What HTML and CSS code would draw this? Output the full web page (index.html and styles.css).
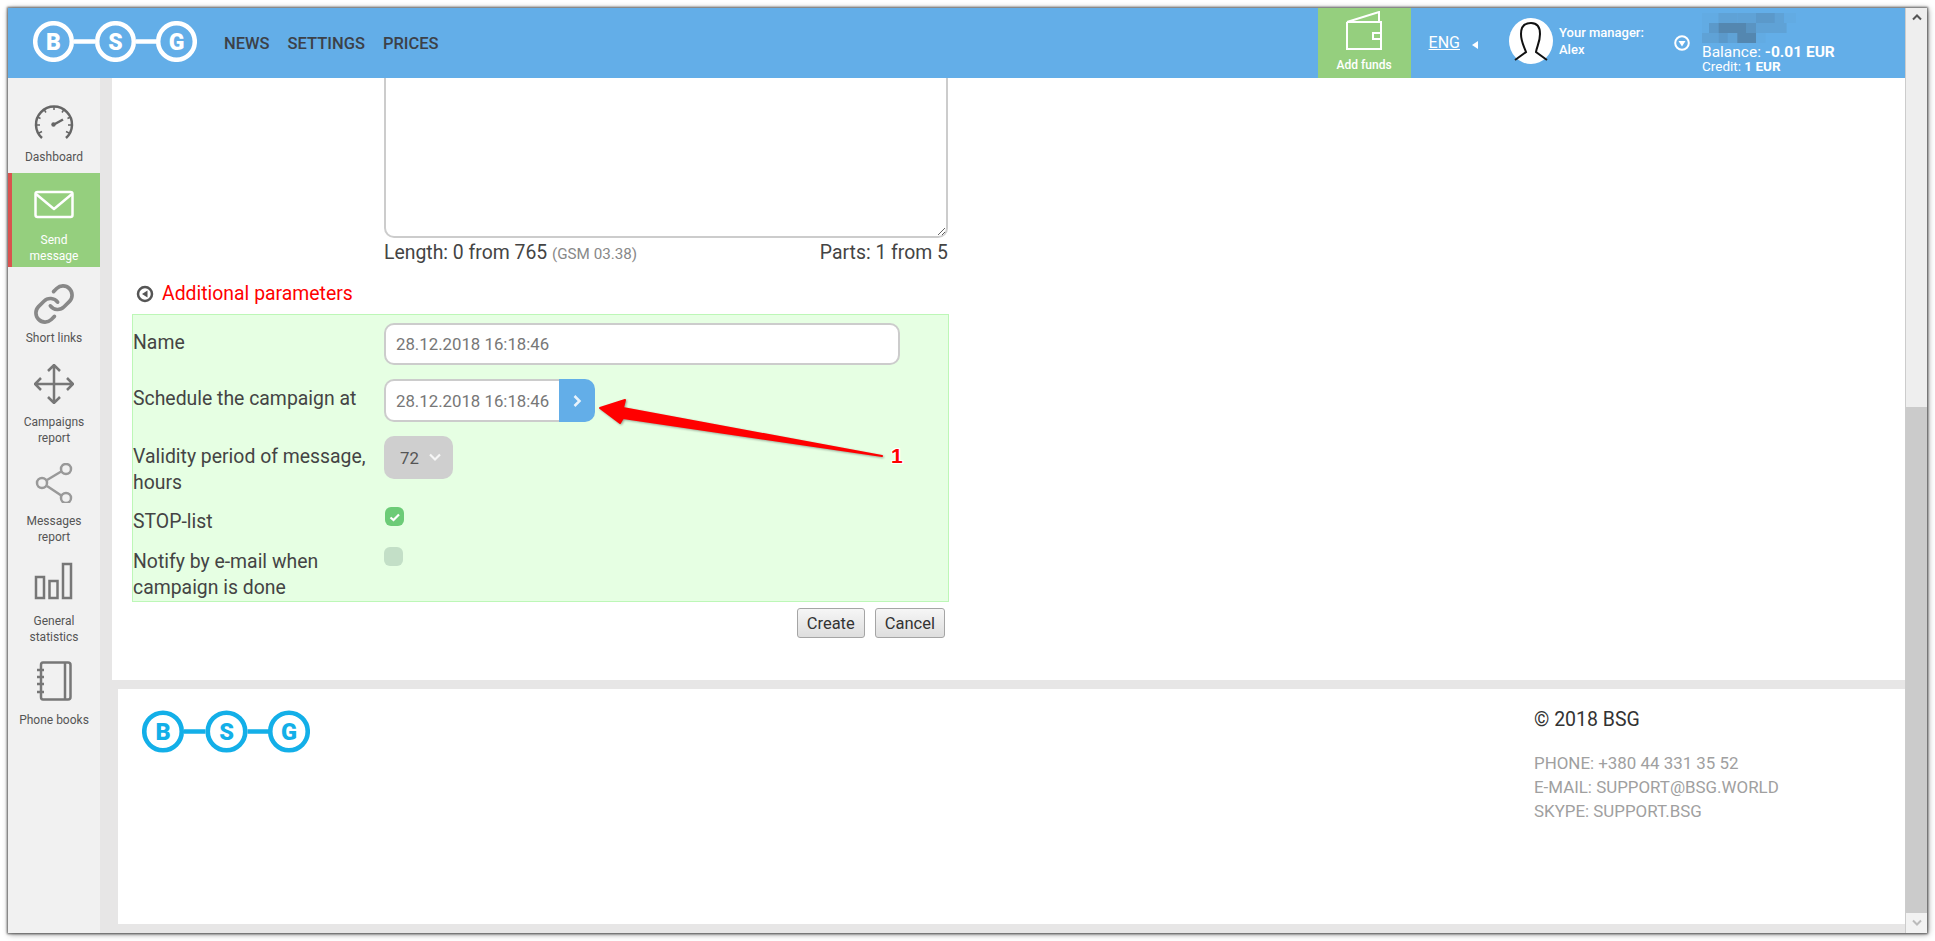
FILE: index.html
```html
<!DOCTYPE html>
<html lang="en">
<head>
<meta charset="utf-8">
<title>BSG - Send message</title>
<link rel="stylesheet" href="styles.css">
</head>
<body>
<div class="window">
  <div class="column">
    <header class="topbar">
      <svg class="logo logo-top" viewBox="0 0 164 41">
        <path class="logo-ring" d="M41 20.500h21M103 20.500h21"/>
        <circle class="logo-ring" cx="20.500" cy="20.500" r="18.300"/>
        <circle class="logo-ring" cx="82.500" cy="20.500" r="18.300"/>
        <circle class="logo-ring" cx="143.500" cy="20.500" r="18.300"/>
        <text class="logo-text" x="20.500" y="28.500">B</text>
        <text class="logo-text" x="82.500" y="28.500">S</text>
        <text class="logo-text" x="143.500" y="28.500">G</text>
      </svg>
      <nav class="topnav">
        <a class="topnav-link">NEWS</a>
        <a class="topnav-link">SETTINGS</a>
        <a class="topnav-link">PRICES</a>
      </nav>
      <div class="topbar-right">
        <a class="funds">
          <svg class="funds-icon" viewBox="0 0 36 39">
            <path d="M1 11L33 1V11M1 11V38H35V11H1M35 22H27V28H35"/>
          </svg>
          <span class="funds-label">Add funds</span>
        </a>
        <a class="lang">ENG</a>
        <span class="lang-caret"></span>
        <svg class="avatar" viewBox="0 0 44 46">
          <ellipse class="avatar-bg" cx="22" cy="23" rx="22" ry="23"/>
          <path class="avatar-line" d="M6 42L17 34C15 28 12 24 12 16C12 8 16 5 22 5C28 5 31 8 31 16C31 24 28 28 27 34L38 42"/>
        </svg>
        <div class="manager">
          <span class="manager-line">Your manager:</span>
          <span class="manager-line">Alex</span>
        </div>
        <svg class="account-toggle" viewBox="0 0 16 16">
          <circle class="toggle-ring" cx="8" cy="8" r="6.800"/>
          <path class="toggle-tri" d="M4.500 6h7L8 11.500z"/>
        </svg>
        <div class="account">
          <svg class="mosaic" viewBox="0 0 80 30" preserveAspectRatio="none">
            <rect class="m1" x="0" y="0" width="14" height="10"/>
            <rect class="m2" x="14" y="0" width="16" height="10"/>
            <rect class="m2" x="30" y="0" width="16" height="10"/>
            <rect class="m3" x="46" y="0" width="16" height="10"/>
            <rect class="m2" x="62" y="0" width="8" height="10"/>
            <rect class="m1" x="70" y="0" width="10" height="10"/>
            <rect class="m1" x="0" y="10" width="6" height="10"/>
            <rect class="m3" x="6" y="10" width="8" height="10"/>
            <rect class="m4" x="14" y="10" width="24" height="10"/>
            <rect class="m5" x="38" y="10" width="8" height="10"/>
            <rect class="m2" x="46" y="10" width="26" height="10"/>
            <rect class="m2" x="0" y="20" width="14" height="10"/>
            <rect class="m3" x="14" y="20" width="8" height="10"/>
            <rect class="m2" x="22" y="20" width="8" height="10"/>
            <rect class="m4" x="30" y="20" width="16" height="10"/>
            <rect class="m1" x="46" y="20" width="8" height="10"/>
          </svg>
          <div class="balance">Balance: <b>-0.01 EUR</b></div>
          <div class="credit">Credit: <b>1 EUR</b></div>
        </div>
      </div>
    </header>

    <div class="body-row">
      <aside class="sidebar">
        <a class="side-item side-dash">
          <svg class="side-icon" viewBox="0 0 40 40">
            <path class="ico ico-dark" d="M8 34A18 18 0 1 1 32 34"/>
            <path class="ico-thin" d="M20 2.500V6M10 5.500l2 3M3.500 13l3 1.500M2 21h4M36.500 13l-3 1.500M38 21h-4M30 5.500l-2 3M5 29l3-1.500M35 29l-3-1.500"/>
            <path class="ico ico-dark" d="M20 20.500L29 15.500"/>
            <circle class="ico-dot" cx="19.500" cy="20.500" r="2.200"/>
          </svg>
          <span class="side-label">Dashboard</span>
        </a>
        <a class="side-item side-send">
          <svg class="side-icon" viewBox="0 0 40 40">
            <rect class="ico-white" x="1.500" y="8" width="37" height="25" rx="2"/>
            <path class="ico-white" d="M2 10L20 25L38 10"/>
          </svg>
          <span class="side-label">Send<br>message</span>
        </a>
        <a class="side-item side-links">
          <svg class="side-icon" viewBox="1 1 22 22">
            <path class="ico-link" d="M10 13a5 5 0 0 0 7.540.540l3-3a5 5 0 0 0-7.070-7.070l-1.720 1.710"/>
            <path class="ico-link" d="M14 11a5 5 0 0 0-7.540-.540l-3 3a5 5 0 0 0 7.070 7.070l1.710-1.710"/>
          </svg>
          <span class="side-label">Short links</span>
        </a>
        <a class="side-item side-camp">
          <svg class="side-icon" viewBox="0 0 40 40">
            <path class="ico ico-move" d="M20 1V39M1 20H39M14 7L20 1L26 7M14 33L20 39L26 33M7 14L1 20L7 26M33 14L39 20L33 26"/>
          </svg>
          <span class="side-label">Campaigns<br>report</span>
        </a>
        <a class="side-item side-msg">
          <svg class="side-icon" viewBox="0 0 40 40">
            <path class="ico ico-share" d="M13 17L28 8M13 23L28 33"/>
            <circle class="ico ico-share" cx="8" cy="20" r="5"/>
            <circle class="ico ico-share" cx="32" cy="6" r="5"/>
            <circle class="ico ico-share" cx="32" cy="35" r="5"/>
          </svg>
          <span class="side-label">Messages<br>report</span>
        </a>
        <a class="side-item side-stats">
          <svg class="side-icon" viewBox="0 0 40 40">
            <rect class="ico ico-move" x="2" y="16" width="8" height="21"/>
            <rect class="ico ico-move" x="15.500" y="20" width="8" height="17"/>
            <rect class="ico ico-move" x="29" y="3" width="8" height="34"/>
          </svg>
          <span class="side-label">General<br>statistics</span>
        </a>
        <a class="side-item side-books">
          <svg class="side-icon" viewBox="0 0 40 40">
            <path class="ico ico-move" d="M7 5V4C7 2.500 8 1.500 9 1.500H34C35.500 1.500 36.500 2.500 36.500 4V36C36.500 37.500 35.500 38.500 34 38.500H9C8 38.500 7 37.500 7 36V5M31 1.500V38.500"/>
            <path class="ico ico-move" d="M3 9H10M3 16H10M3 23H10M3 31H10"/>
          </svg>
          <span class="side-label">Phone books</span>
        </a>
      </aside>

      <div class="page">
        <main class="main">
          <form class="form">
            <textarea class="message"></textarea>
            <div class="counter">
              <span>Length: 0 from 765 <small class="counter-note">(GSM 03.38)</small></span>
              <span>Parts: 1 from 5</span>
            </div>
            <div class="params-toggle">
              <svg class="params-icon" viewBox="0 0 18 18">
                <circle class="params-ring" cx="9" cy="9" r="7"/>
                <path class="params-tri" d="M11.500 5.500v7L6 9z"/>
              </svg>
              <span class="params-title">Additional parameters</span>
            </div>
            <section class="panel">
              <div class="row row-name">
                <label class="row-label">Name</label>
                <input class="field field-name" value="28.12.2018 16:18:46">
              </div>
              <div class="row row-date">
                <label class="row-label">Schedule the campaign at</label>
                <div class="date-group">
                  <input class="field field-date" value="28.12.2018 16:18:46">
                  <span class="date-btn">
                    <svg class="date-chevron" viewBox="0 0 10 14"><path d="M2.500 2L7.500 7L2.500 12"/></svg>
                  </span>
                </div>
              </div>
              <div class="row row-valid">
                <label class="row-label">Validity period of message, hours</label>
                <div class="select">
                  <span>72</span>
                  <svg class="select-chevron" viewBox="0 0 14 10"><path d="M2 2.500L7 7.500L12 2.500"/></svg>
                </div>
              </div>
              <div class="row row-stop">
                <label class="row-label">STOP-list</label>
                <span class="check check-on">
                  <svg class="check-mark" viewBox="0 0 14 14"><path d="M2.500 7.500L5.500 10L11 4.500"/></svg>
                </span>
              </div>
              <div class="row row-notify">
                <label class="row-label">Notify by e-mail when campaign is done</label>
                <span class="check check-off"></span>
              </div>
              <svg class="callout-arrow" viewBox="0 0 300 70">
                <polygon class="arrow-shape" points="8,14 33,6 31,14 290,62 31,24 28,29"/>
              </svg>
              <span class="callout-num">1</span>
            </section>
            <div class="actions">
              <button class="btn" type="button">Create</button>
              <button class="btn" type="button">Cancel</button>
            </div>
          </form>
        </main>
        <footer class="footer">
          <svg class="logo logo-bottom" viewBox="0 0 164 41">
            <path class="logo-ring" d="M41 20.500h21M103 20.500h21"/>
            <circle class="logo-ring" cx="20.500" cy="20.500" r="18.300"/>
            <circle class="logo-ring" cx="82.500" cy="20.500" r="18.300"/>
            <circle class="logo-ring" cx="143.500" cy="20.500" r="18.300"/>
            <text class="logo-text" x="20.500" y="28.500">B</text>
            <text class="logo-text" x="82.500" y="28.500">S</text>
            <text class="logo-text" x="143.500" y="28.500">G</text>
          </svg>
          <div class="contacts">
            <div class="copyright">© 2018 BSG</div>
            <div class="contact-line">PHONE: +380 44 331 35 52</div>
            <div class="contact-line">E-MAIL: SUPPORT@BSG.WORLD</div>
            <div class="contact-line">SKYPE: SUPPORT.BSG</div>
          </div>
        </footer>
      </div>
    </div>
  </div>

  <div class="scrollbar">
    <div class="scroll-track">
      <svg class="scroll-arrow" viewBox="0 0 12 8"><path d="M2 6.500L6 2.500L10 6.500"/></svg>
    </div>
    <div class="scroll-thumb"></div>
    <div class="scroll-end">
      <svg class="scroll-arrow scroll-arrow-down" viewBox="0 0 12 8"><path d="M2 1.500L6 5.500L10 1.500"/></svg>
    </div>
  </div>
</div>
</body>
</html>
```

FILE: styles.css
```css
* { box-sizing: border-box; }
html, body { height: 100%; }
body {
  margin: 0;
  background: #fff;
  overflow: hidden;
  font-family: Roboto, "Liberation Sans", sans-serif;
  color: #444;
  padding: 8px;
}
.window {
  width: 1919px;
  height: 925px;
  display: flex;
  background: #e7e6e6;
  box-shadow: 0 0 2px 1px rgba(0,0,0,.55), 1px 1px 6px rgba(0,0,0,.45);
}
.column { width: 1897px; display: flex; flex-direction: column; }

/* top bar */
.topbar {
  height: 70px;
  flex: none;
  background: #63aee8;
  display: flex;
  align-items: flex-start;
}
.logo { display: block; }
.logo-top { width: 164px; height: 41px; margin: 13px 0 0 25px; color: #fff; }
.logo-bottom { width: 168px; height: 43px; color: #13afe8; }
.logo-ring { fill: none; stroke: currentColor; stroke-width: 4.500; }
.logo-text {
  fill: currentColor;
  font-family: Roboto, "Liberation Sans", sans-serif;
  font-weight: 900;
  font-size: 23px;
  text-anchor: middle;
}
.topnav { display: flex; gap: 18px; margin: 26px 0 0 27px; }
.topnav-link { font-size: 16.500px; line-height: 20px; font-weight: 500; color: #3c4148; }
.topbar-right { margin-left: auto; display: flex; align-items: flex-start; }
.funds {
  width: 93px;
  height: 70px;
  background: #95cf7e;
  display: flex;
  flex-direction: column;
  align-items: center;
}
.funds-icon { width: 36px; height: 39px; margin-top: 3px; fill: none; stroke: #fff; stroke-width: 2; }
.funds-label { margin-top: 8px; font-size: 12px; line-height: 14px; font-weight: 500; color: #fff; }
.lang {
  margin: 25px 0 0 18px;
  font-size: 16px;
  line-height: 20px;
  color: #fff;
  text-decoration: underline;
}
.lang-caret {
  margin: 33px 0 0 12px;
  width: 0;
  height: 0;
  border: 4px solid transparent;
  border-left-width: 0;
  border-right: 6px solid #fff;
}
.avatar { width: 44px; height: 46px; margin: 10px 0 0 31px; }
.avatar-bg { fill: #fff; }
.avatar-line { fill: none; stroke: #111; stroke-width: 2; }
.manager {
  width: 115px;
  margin: 18px 0 0 6px;
  display: flex;
  flex-direction: column;
  gap: 3px;
  color: #fff;
  font-size: 13px;
  line-height: 14px;
  font-weight: 500;
}
.account-toggle { width: 16px; height: 16px; margin-top: 27px; }
.toggle-ring { fill: none; stroke: #fff; stroke-width: 2; }
.toggle-tri { fill: #fff; }
.account { margin: 5px 0 0 12px; width: 203px; color: #fff; }
.mosaic { display: block; width: 94px; height: 30px; }
.m1 { fill: #62abe3; }
.m2 { fill: #5fa2d6; }
.m3 { fill: #5b99ca; }
.m4 { fill: #5487b0; }
.m5 { fill: #5a94c2; }
.balance { font-size: 15.500px; line-height: 16px; margin-top: 1px; white-space: nowrap; }
.credit { font-size: 13.500px; line-height: 12px; white-space: nowrap; }
.account b { font-weight: 700; }

/* sidebar */
.body-row { flex: 1; display: flex; min-height: 0; }
.sidebar { width: 92px; flex: none; background: #f1f1f1; }
.side-item { display: flex; flex-direction: column; align-items: center; }
.side-icon { width: 40px; height: 40px; display: block; flex: none; }
.side-label { font-size: 12px; line-height: 16px; text-align: center; color: #555; }
.side-dash { padding: 26px 0 8px; gap: 5px; }
.side-send {
  padding: 11px 0 3px;
  gap: 8px;
  background: #95cf7e;
  box-shadow: inset 4px 0 0 #d9534f;
}
.side-send .side-label { color: #fff; }
.side-links { padding-top: 17px; gap: 6px; }
.side-camp { padding-top: 18px; gap: 10px; }
.side-msg { padding-top: 17px; gap: 10px; }
.side-stats { padding-top: 16px; gap: 12px; }
.side-books { padding-top: 16px; gap: 11px; }
.ico { fill: none; stroke-width: 2.500; }
.ico-dark { stroke: #666; }
.ico-thin { fill: none; stroke: #666; stroke-width: 1.500; }
.ico-dot { fill: #666; }
.ico-white { fill: none; stroke: #fff; stroke-width: 2.500; stroke-linejoin: round; }
.ico-link { fill: none; stroke: #888; stroke-width: 2; stroke-linecap: round; }
.ico-move { stroke: #777; }
.ico-share { stroke: #999; }

/* page */
.page { flex: 1; padding-left: 12px; display: flex; flex-direction: column; min-width: 0; }
.main { height: 602px; flex: none; background: #fff; padding-left: 20px; overflow: hidden; }
.form { width: 817px; font-size: 19.400px; line-height: 26px; }
.message {
  display: block;
  width: 564px;
  height: 160px;
  margin-left: 252px;
  border: 2px solid #ccc;
  border-top: 0;
  border-radius: 0 0 10px 10px;
  background: #fff;
  outline: 0;
}
.counter {
  width: 564px;
  margin: 2px 0 0 252px;
  display: flex;
  justify-content: space-between;
}
.counter-note { font-size: 15.200px; color: #888; }
.params-toggle { margin-top: 14px; padding-left: 4px; display: flex; align-items: center; gap: 8px; }
.params-icon { width: 18px; height: 18px; }
.params-ring { fill: none; stroke: #555; stroke-width: 2.500; }
.params-tri { fill: #555; }
.params-title { color: #f00; }
.panel {
  position: relative;
  margin-top: 7px;
  height: 288px;
  padding-top: 8px;
  background: #e6ffe3;
  border: 1px solid #bdf7b7;
}
.row { display: grid; grid-template-columns: 251px 1fr; align-items: start; }
.row-name { height: 42px; margin-bottom: 14px; }
.row-date { height: 43px; margin-bottom: 14px; }
.row-valid { height: 60px; margin-bottom: 11px; }
.row-stop { height: 40px; }
.row-name .row-label, .row-date .row-label { padding-top: 7px; }
.row-valid .row-label { padding-top: 8px; padding-right: 10px; }
.row-stop .row-label, .row-notify .row-label { padding-top: 2px; }
.row-notify .row-label { padding-right: 10px; }
.field {
  display: block;
  height: 42px;
  padding: 0 10px;
  border: 2px solid #ccc;
  border-radius: 10px;
  background: #fff;
  color: #777;
  font: 16.800px Roboto, "Liberation Sans", sans-serif;
  outline: 0;
}
.field-name { width: 516px; }
.date-group { display: flex; height: 43px; }
.field-date { width: 175px; height: 43px; border-right: 0; border-radius: 10px 0 0 10px; }
.date-btn {
  width: 36px;
  background: #63aee8;
  border-radius: 0 10px 10px 0;
  display: flex;
  align-items: center;
  justify-content: center;
}
.date-chevron { width: 10px; height: 14px; fill: none; stroke: #e8f3fc; stroke-width: 2.500; }
.select {
  width: 69px;
  height: 43px;
  border-radius: 10px;
  background: #cfcfcf;
  display: flex;
  align-items: center;
  gap: 9px;
  padding-left: 16px;
  font-size: 16.800px;
  color: #555;
}
.select-chevron { width: 14px; height: 10px; fill: none; stroke: #f6f6f6; stroke-width: 2.200; margin-top: -2px; }
.check {
  width: 19px;
  height: 19px;
  border-radius: 6px;
  display: flex;
  align-items: center;
  justify-content: center;
}
.check-on { background: #6ccb77; margin-left: 1px; }
.check-off { background: #c3dfc7; }
.check-mark { width: 14px; height: 14px; fill: none; stroke: #fff; stroke-width: 2.200; }
.callout-arrow {
  position: absolute;
  left: 459px;
  top: 79px;
  width: 300px;
  height: 70px;
  filter: drop-shadow(1px 1px 1px rgba(0,0,0,.35));
}
.arrow-shape { fill: #f00; stroke: #f00; stroke-width: 2; stroke-linejoin: round; }
.callout-num {
  position: absolute;
  left: 758px;
  top: 130px;
  font: 700 21px/22px "Liberation Sans", sans-serif;
  color: #f00;
  text-shadow: 1px 0 0 #fff, -1px 0 0 #fff, 0 1px 0 #fff, 0 -1px 0 #fff, 1px 1px 0 #fff, -1px -1px 0 #fff, 1px -1px 0 #fff, -1px 1px 0 #fff;
}
.actions { margin-top: 6px; padding-right: 4px; display: flex; justify-content: flex-end; gap: 10px; }
.btn {
  height: 30px;
  padding: 0 9px;
  border: 1px solid #a5a5a5;
  border-radius: 3px;
  background: linear-gradient(#f6f6f6, #dedede);
  font: 16.500px Roboto, "Liberation Sans", sans-serif;
  color: #333;
}

/* footer */
.footer {
  height: 235px;
  flex: none;
  margin: 9px 0 0 6px;
  padding: 21px 0 0 24px;
  background: #fff;
  display: flex;
  justify-content: space-between;
}
.contacts { width: 371px; }
.copyright { font-size: 19.500px; line-height: 20px; color: #333; margin-bottom: 21px; }
.contact-line { font-size: 16.900px; line-height: 24px; color: #a0a0a0; }

/* scrollbar */
.scrollbar { width: 22px; flex: none; display: flex; flex-direction: column; background: #eee; border-left: 1px solid #ccc; }
.scroll-track { flex: 1; padding-top: 5px; }
.scroll-thumb { height: 506px; flex: none; background: #cbcbcb; }
.scroll-end { height: 20px; flex: none; background: #f2f2f2; padding-top: 6px; }
.scroll-arrow { display: block; width: 12px; height: 8px; margin: 0 auto; fill: none; stroke: #555; stroke-width: 2; }
.scroll-arrow-down { stroke: #bbb; }
```
